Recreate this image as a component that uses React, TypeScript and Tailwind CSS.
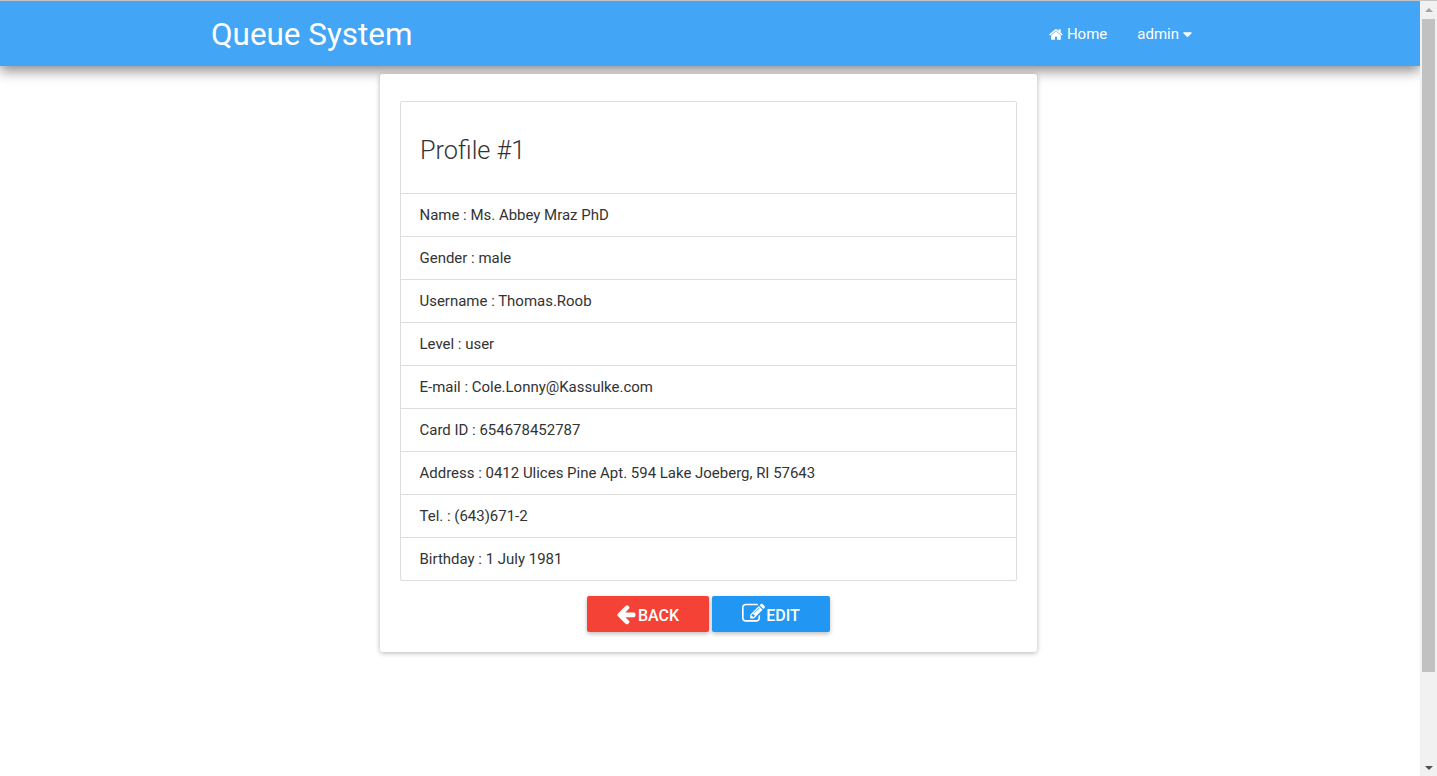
const rows = [
  "Name : Ms. Abbey Mraz PhD",
  "Gender : male",
  "Username : Thomas.Roob",
  "Level : user",
  "E-mail : Cole.Lonny@Kassulke.com",
  "Card ID : 654678452787",
  "Address : 0412 Ulices Pine Apt. 594 Lake Joeberg, RI 57643",
  "Tel. : (643)671-2",
  "Birthday : 1 July 1981",
];

const Icon = ({ d, className }: { d: string; className: string }) => (
  <svg viewBox="0 0 1792 1792" fill="currentColor" className={className}>
    <path d={d} />
  </svg>
);

const homePath =
  "M1408 992v480q0 26-19 45t-45 19h-384v-384h-256v384h-384q-26 0-45-19t-19-45v-480q0-1 .5-3t.5-3l575-474 575 474q1 2 1 6zm223-69l-62 74q-8 9-21 11h-3q-13 0-21-7l-692-577-692 577q-12 8-24 7-13-2-21-11l-62-74q-8-10-7-23.5t11-21.5l719-599q32-26 76-26t76 26l244 204v-195q0-14 9-23t23-9h192q14 0 23 9t9 23v408l219 182q10 8 11 21.5t-7 23.5z";
const caretPath =
  "M1408 704q0 26-19 45l-448 448q-19 19-45 19t-45-19l-448-448q-19-19-19-45t19-45 45-19h896q26 0 45 19t19 45z";
const arrowPath =
  "M1664 896v128q0 53-32.5 90.5t-84.5 37.5h-704l293 294q38 36 38 90t-38 90l-75 76q-38 38-90 38-53 0-91-38l-651-652q-37-37-37-90 0-52 37-91l651-650q38-38 91-38 52 0 90 38l75 74q38 38 38 91t-38 91l-293 293h704q52 0 84.5 37.5t32.5 90.5z";
const editPath =
  "M888 1184l116-116-152-152-116 116v56h96v96h56zm440-720q-16-16-33 1l-350 350q-17 17-1 33t33-1l350-350q17-17 1-33zm80 594v190q0 119-84.5 203.5t-203.5 84.5h-832q-119 0-203.5-84.5t-84.5-203.5v-832q0-119 84.5-203.5t203.5-84.5h832q63 0 117 25 15 7 18 23 3 17-9 29l-49 49q-14 14-32 8-23-6-45-6h-832q-66 0-113 47t-47 113v832q0 66 47 113t113 47h832q66 0 113-47t47-113v-126q0-13 9-22l64-64q15-15 35-7t20 29zm-96-738l288 288-672 672h-288v-288zm444 132l-92 92-288-288 92-92q28-28 68-28t68 28l152 152q28 28 28 68t-28 68z";

const Scrollbar = () => (
  <div className="flex h-full w-[17px] shrink-0 flex-col items-center bg-[#f1f1f1]">
    <div className="flex h-[18px] w-full items-center justify-center">
      <div className="h-0 w-0 border-x-[4px] border-b-[4px] border-x-transparent border-b-[#a3a3a3]" />
    </div>
    <div className="h-[653px] w-[13px] shrink-0 bg-[#c1c1c1]" />
    <div className="flex-1" />
    <div className="flex h-[17px] w-full items-center justify-center">
      <div className="h-0 w-0 border-x-[4px] border-t-[4px] border-x-transparent border-t-[#505050]" />
    </div>
  </div>
);

export default function App() {
  return (
    <div className="flex h-[776px] flex-col overflow-hidden bg-white font-['Roboto',sans-serif] text-[#333333]">
      <div className="h-px shrink-0 bg-[#c4c4c4]" />
      <div className="flex min-h-0 flex-1">
        <div className="flex min-w-0 flex-1 flex-col overflow-hidden">
          <nav className="relative z-10 h-[65px] shrink-0 bg-[#42a5f5] shadow-[0_5px_12px_rgba(0,0,0,0.45)]">
            <div className="mx-auto flex h-full w-[1000px] items-center justify-between pr-[15px] pl-px text-white">
              <span className="pt-[2px] text-[31.4px] leading-none">Queue System</span>
              <div className="flex items-center gap-[30px] pt-[1px] text-[15px]">
                <span className="flex items-center gap-[3px]">
                  <Icon d={homePath} className="h-[15px] w-[15px]" />
                  Home
                </span>
                <span className="flex items-center gap-px">
                  admin
                  <Icon d={caretPath} className="h-[15px] w-[15px]" />
                </span>
              </div>
            </div>
          </nav>
          <main className="flex justify-center pt-2 pr-[3px]">
            <div className="relative z-20 h-[578px] w-[657px] rounded-[3px] bg-white px-5 pt-[27px] shadow-[0_1px_5px_rgba(0,0,0,0.3)]">
              <div className="rounded-[2px] border border-[#dddddd]">
                <h1 className="flex h-[91px] items-center px-[19px] pt-[7px] text-[25.3px] font-light leading-none">
                  Profile #1
                </h1>
                {rows.map((row) => (
                  <div
                    key={row}
                    className="flex h-[43px] items-center border-t border-[#dddddd] px-[18.5px] pt-px text-[14.98px]"
                  >
                    {row}
                  </div>
                ))}
              </div>
              <div className="mt-[15px] flex justify-center gap-[3px] text-[16px] font-medium text-white">
                <button className="flex h-9 w-[122px] items-center justify-center gap-px rounded-[2px] bg-[#f44336] pt-[3px] pr-[2px] shadow-[0_2px_4px_rgba(0,0,0,0.25)]">
                  <Icon d={arrowPath} className="mb-[3px] h-[22px] w-[22px]" />
                  BACK
                </button>
                <button className="flex h-9 w-[118px] items-center justify-center gap-px rounded-[2px] bg-[#2196f3] pt-[3px] shadow-[0_2px_4px_rgba(0,0,0,0.25)]">
                  <Icon d={editPath} className="mb-[4px] h-[23px] w-[23px]" />
                  EDIT
                </button>
              </div>
            </div>
          </main>
        </div>
        <Scrollbar />
      </div>
    </div>
  );
}
